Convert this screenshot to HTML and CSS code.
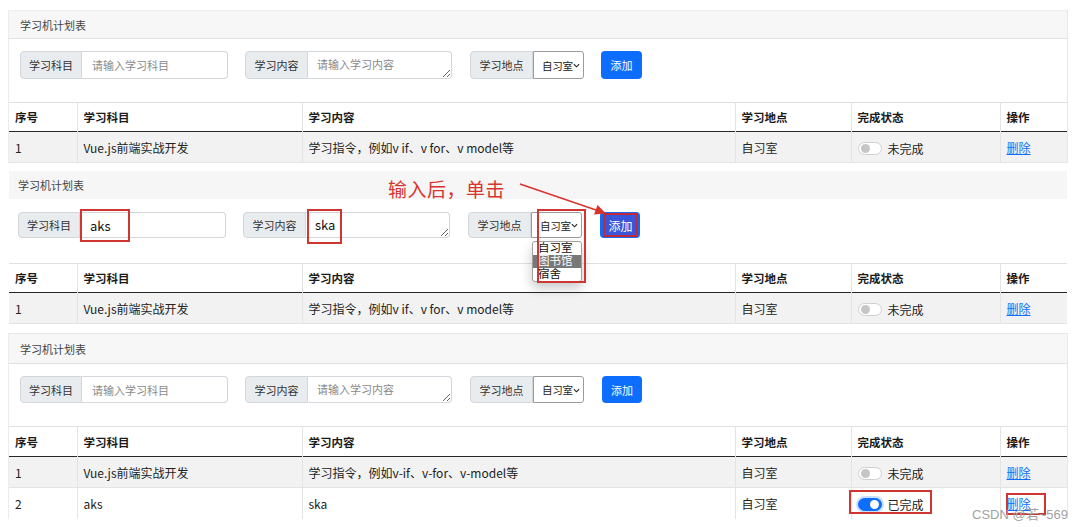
FILE: index.html
```html
<!DOCTYPE html>
<html lang="zh-CN">
<head>
<meta charset="utf-8">
<title>学习机计划表</title>
<link rel="stylesheet" href="styles.css">
</head>
<body>
<main class="page">

  <!-- Shot 1 -->
  <section class="shot shot-1">
    <div class="card">
      <div class="card-header">学习机计划表</div>
      <div class="form-row">
        <div class="group g1"><span class="addon">学习科目</span><input class="field" type="text" placeholder="请输入学习科目"></div>
        <div class="group g2"><span class="addon">学习内容</span><textarea class="field area" placeholder="请输入学习内容"></textarea></div>
        <div class="group g3"><span class="addon">学习地点</span><div class="select"><span class="sel-text">自习室</span><svg class="chev" viewBox="0 0 8 5" width="7" height="5"><path d="M1 1l3 3 3-3" fill="none" stroke="#222" stroke-width="1.3"/></svg></div></div>
        <button class="btn" type="button">添加</button>
      </div>
      <table class="tbl">
        <colgroup><col class="c1"><col class="c2"><col class="c3"><col class="c4"><col class="c5"><col class="c6"></colgroup>
        <thead><tr><th>序号</th><th>学习科目</th><th>学习内容</th><th>学习地点</th><th>完成状态</th><th>操作</th></tr></thead>
        <tbody>
          <tr class="striped"><td>1</td><td>Vue.js前端实战开发</td><td>学习指令，例如v if、v for、v model等</td><td>自习室</td><td><span class="status"><span class="switch"></span>未完成</span></td><td><a class="del" href="#">删除</a></td></tr>
        </tbody>
      </table>
    </div>
  </section>

  <!-- Shot 2 -->
  <section class="shot shot-2">
    <div class="card">
      <div class="card-header">学习机计划表</div>
      <div class="form-row">
        <div class="group g1"><span class="addon">学习科目</span><input class="field typed" type="text" value="aks"><span class="mark mark-aks"></span></div>
        <div class="group g2"><span class="addon">学习内容</span><textarea class="field area typed">ska</textarea><span class="mark mark-ska"></span></div>
        <div class="group g3"><span class="addon">学习地点</span><div class="select"><span class="sel-text">自习室</span><svg class="chev" viewBox="0 0 8 5" width="7" height="5"><path d="M1 1l3 3 3-3" fill="none" stroke="#222" stroke-width="1.3"/></svg></div>
          <ul class="dropdown"><li>自习室</li><li class="hl">图书馆</li><li>宿舍</li></ul>
          <span class="mark mark-select"></span>
        </div>
        <button class="btn btn-pressed" type="button"><span class="btn-label">添加</span></button>
      </div>
      <table class="tbl">
        <colgroup><col class="c1"><col class="c2"><col class="c3"><col class="c4"><col class="c5"><col class="c6"></colgroup>
        <thead><tr><th>序号</th><th>学习科目</th><th>学习内容</th><th>学习地点</th><th>完成状态</th><th>操作</th></tr></thead>
        <tbody>
          <tr class="striped"><td>1</td><td>Vue.js前端实战开发</td><td>学习指令，例如v if、v for、v model等</td><td>自习室</td><td><span class="status"><span class="switch"></span>未完成</span></td><td><a class="del" href="#">删除</a></td></tr>
        </tbody>
      </table>
    </div>
    <div class="note">输入后，单击</div>
    <svg class="arrow" viewBox="0 0 95 48" width="95" height="48">
      <line x1="5" y1="6" x2="81" y2="32" stroke="#d8342e" stroke-width="1.6"/>
      <polygon points="91,35.5 79,36.5 82.5,27" fill="#d8342e"/>
    </svg>
  </section>

  <!-- Shot 3 -->
  <section class="shot shot-3">
    <div class="card">
      <div class="card-header">学习机计划表</div>
      <div class="form-row">
        <div class="group g1"><span class="addon">学习科目</span><input class="field" type="text" placeholder="请输入学习科目"></div>
        <div class="group g2"><span class="addon">学习内容</span><textarea class="field area" placeholder="请输入学习内容"></textarea></div>
        <div class="group g3"><span class="addon">学习地点</span><div class="select"><span class="sel-text">自习室</span><svg class="chev" viewBox="0 0 8 5" width="7" height="5"><path d="M1 1l3 3 3-3" fill="none" stroke="#222" stroke-width="1.3"/></svg></div></div>
        <button class="btn" type="button">添加</button>
      </div>
      <table class="tbl">
        <colgroup><col class="c1"><col class="c2"><col class="c3"><col class="c4"><col class="c5"><col class="c6"></colgroup>
        <thead><tr><th>序号</th><th>学习科目</th><th>学习内容</th><th>学习地点</th><th>完成状态</th><th>操作</th></tr></thead>
        <tbody>
          <tr class="striped"><td>1</td><td>Vue.js前端实战开发</td><td>学习指令，例如v-if、v-for、v-model等</td><td>自习室</td><td><span class="status"><span class="switch"></span>未完成</span></td><td><a class="del" href="#">删除</a></td></tr>
          <tr><td>2</td><td>aks</td><td>ska</td><td>自习室</td><td><span class="status"><span class="switch on"></span>已完成<span class="mark mark-status"></span></span></td><td><a class="del del-last" href="#">删除<span class="mark mark-del"></span></a></td></tr>
        </tbody>
      </table>
    </div>
    <div class="watermark">CSDN @若~569</div>
  </section>

</main>
</body>
</html>
```
FILE: styles.css
```css
* { box-sizing: border-box; }
html, body { margin: 0; padding: 0; background: #fff; }
body {
  width: 1080px;
  height: 527px;
  overflow: hidden;
  font-family: "Noto Sans CJK SC", "Noto Sans", sans-serif;
  font-size: 12px;
  color: #222;
}
.page { display: flex; flex-direction: column; }

.shot { position: relative; padding-left: 8px; overflow: hidden; }
.shot-1 { height: 168px; padding-top: 10px; }
.shot-2 { height: 165px; padding-top: 3px; }
.shot-3 { height: 194px; }

.card {
  width: 1060px;
  border-left: 1px solid #ececec;
  border-right: 1px solid #e6e6e6;
}
.shot-2 .card { border-color: transparent; }

.card-header {
  display: flex;
  align-items: center;
  height: 29px;
  padding-left: 11px;
  background: #f7f7f7;
  border-top: 1px solid #ededed;
  border-bottom: 1px solid #e1e1e1;
  font-size: 11px;
  color: #444;
}
.shot-2 .card-header { height: 28px; padding-left: 9px; border: none; background: #f6f6f6; }
.shot-3 .card-header { height: 31px; border-top-color: #e6e6e6; }

/* form row */
.form-row {
  display: flex;
  align-items: stretch;
  height: 28px;
  margin-top: 12px;
  padding-left: 11px;
}
.shot-2 .form-row { height: 26px; margin-top: 13px; padding-left: 9px; }
.shot-3 .form-row { height: 27px; margin-top: 12px; }

.group { position: relative; display: flex; align-items: stretch; }
.g2 { margin-left: 17px; }
.g3 { margin-left: 18px; }

.addon {
  display: flex;
  align-items: center;
  justify-content: center;
  width: 63px;
  background: #e9ecef;
  border: 1px solid #d3d7db;
  border-radius: 4px 0 0 4px;
  font-size: 11px;
  color: #333;
}
.g1 .addon { width: 62px; }

.field {
  margin: 0;
  border: 1px solid #d3d7db;
  border-left: none;
  border-radius: 0 4px 4px 0;
  background: #fff;
  font-family: inherit;
  font-size: 11px;
  color: #222;
  outline: none;
}
.g1 .field { width: 146px; padding: 0 10px; }
.area { width: 144px; padding: 5px 9px; resize: both; line-height: 15px; }
.field::placeholder { color: #8a8a8a; }
.typed { font-size: 13px; color: #111; }
.g2 .typed { padding-top: 4px; }

.select {
  position: relative;
  display: flex;
  align-items: center;
  width: 51px;
  padding-left: 8px;
  background: #fff;
  border: 1px solid #9b9b9b;
  border-radius: 0 3px 3px 0;
  color: #222;
}
.sel-text { font-size: 10.5px; letter-spacing: -0.3px; }
.chev { position: absolute; right: 3px; top: 50%; margin-top: -2px; }

.btn {
  width: 41px;
  margin-left: 17px;
  padding: 0;
  border: none;
  border-radius: 4px;
  background: #0d6efd;
  color: #fff;
  font-family: inherit;
  font-size: 11px;
  position: relative;
}
.shot-2 .btn, .shot-3 .btn { margin-left: 18px; width: 40px; }
.btn-pressed { background: #1469f0; }
.btn-label {
  position: absolute;
  left: 3px; top: 1px; right: 2px; bottom: 1px;
  display: flex; align-items: center; justify-content: center;
  border: 2px solid #c0283c;
  background: #3b55d8;
  font-size: 12px;
}

/* dropdown overlay */
.dropdown {
  position: absolute;
  left: 64px;
  top: 29px;
  width: 50px;
  margin: 0;
  padding: 0;
  list-style: none;
  background: #fff;
  border: 1px solid #a0a0a0;
  border-radius: 3px;
  box-shadow: 0 6px 12px rgba(0, 0, 0, 0.22);
  color: #111;
  z-index: 2;
  font-family: "Liberation Sans", "Noto Sans CJK SC", sans-serif;
}
.dropdown li {
  height: 13px;
  padding-left: 5px;
  font-size: 11.5px;
  line-height: 13px;
  white-space: nowrap;
}
.dropdown li.hl { background: #787878; color: #fff; }

/* red annotation boxes */
.mark {
  position: absolute;
  border: 2px solid #cf3631;
  pointer-events: none;
  z-index: 3;
}
.mark-aks { left: 62px; top: -3px; width: 50px; height: 33px; }
.mark-ska { left: 64px; top: -3px; width: 35px; height: 35px; }
.mark-select { left: 69px; top: -3px; width: 49px; height: 74px; }
.mark-status { left: -9px; top: -6px; width: 83px; height: 24px; }
.mark-del { left: -1px; top: -2px; width: 40px; height: 22px; }

/* table */
.tbl {
  width: 1058px;
  margin-top: 23px;
  border-collapse: collapse;
  table-layout: fixed;
  font-size: 12px;
  color: #222;
}
.shot-2 .tbl { margin-top: 25px; }
.c1 { width: 68px; }
.c2 { width: 225px; }
.c3 { width: 433px; }
.c4 { width: 116px; }
.c5 { width: 149px; }
.c6 { width: 67px; }

.tbl th, .tbl td {
  padding: 0 0 0 6px;
  text-align: left;
  vertical-align: middle;
  border-right: 1px solid #e4e4e4;
  white-space: nowrap;
}
.tbl th:last-child, .tbl td:last-child { border-right: none; }
.tbl thead tr { border-top: 1px solid #e0e0e0; border-bottom: 1px solid #262626; }
.tbl th { height: 29px; font-size: 11.5px; font-weight: 700; color: #1a1a1a; }
.shot-3 .tbl th { height: 30px; }
.tbl td { height: 31px; }
.tbl tbody tr { border-bottom: 1px solid #e4e4e4; }
.tbl tbody tr.striped { background: #f2f2f2; }
.shot-3 .tbl tbody tr:last-child { border-bottom: none; }

.status { position: relative; display: inline-flex; align-items: center; gap: 6px; vertical-align: middle; }
.switch {
  position: relative;
  width: 24px;
  height: 13px;
  border-radius: 7px;
  border: 1px solid #d0d0d0;
  background: #fff;
}
.switch::after {
  content: "";
  position: absolute;
  top: 1px;
  left: 2px;
  width: 9px;
  height: 9px;
  border-radius: 50%;
  background: #c6c6c6;
}
.switch.on {
  background: #0d6efd;
  border-color: #0d6efd;
  box-shadow: 0 0 0 2px rgba(13, 110, 253, 0.22);
}
.switch.on::after { left: auto; right: 2px; background: #fff; }

.del { position: relative; display: inline-block; color: #0d6efd; text-decoration: underline; font-size: 12px; }
.del-last { font-family: "Liberation Sans", "Noto Sans CJK SC", sans-serif; margin-top: -6px; }

/* annotations */
.note {
  position: absolute;
  left: 388px;
  top: 11px;
  font-size: 19px;
  line-height: 20px;
  color: #d8342e;
  letter-spacing: 0.5px;
}
.arrow { position: absolute; left: 515px; top: 10px; z-index: 4; }

.watermark {
  position: absolute;
  left: 972px;
  top: 175px;
  font-family: "Liberation Sans", Arial, sans-serif;
  font-size: 13px;
  line-height: 14px;
  color: #a3a3a3;
  z-index: 5;
}
```
